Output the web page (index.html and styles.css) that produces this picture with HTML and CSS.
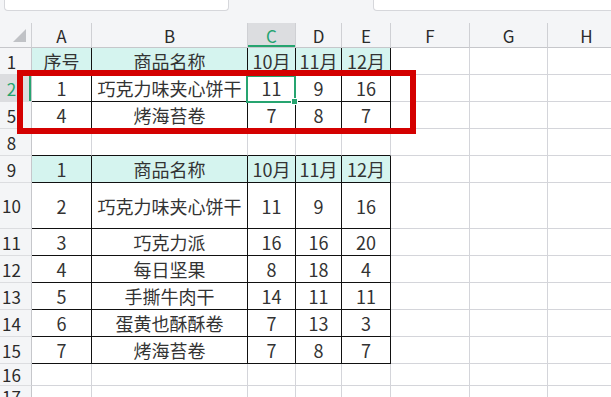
FILE: index.html
```html
<!DOCTYPE html>
<html lang="zh-CN">
    <head>
        <meta charset="UTF-8">
        <title>表格</title>
        <link rel="stylesheet" href="styles.css">
    </head>
    <body>
        <div class="toolbar">
            <div class="toolbar__box toolbar__box--name"></div>
            <div class="toolbar__box toolbar__box--formula"></div>
        </div>
        <div class="sheet">
            <table class="grid">
                <colgroup>
                    <col class="w-head">
                    <col class="w-a">
                    <col class="w-b">
                    <col class="w-c">
                    <col class="w-d">
                    <col class="w-e">
                    <col class="w-f">
                    <col class="w-g">
                    <col class="w-h">
                </colgroup>
                <tr class="row-cols">
                    <th class="corner"></th>
                    <th>A</th><th>B</th><th class="is-active">C</th><th>D</th><th>E</th><th>F</th><th>G</th><th>H</th>
                </tr>
                <tr>
                    <th class="rownum">1</th>
                    <td class="fill line">序号</td><td class="fill line">商品名称</td><td class="fill line">10月</td><td class="fill line">11月</td><td class="fill line">12月</td><td></td><td></td><td></td>
                </tr>
                <tr>
                    <th class="rownum is-active">2</th>
                    <td class="line">1</td><td class="line">巧克力味夹心饼干</td><td class="line">11</td><td class="line">9</td><td class="line">16</td><td></td><td></td><td></td>
                </tr>
                <tr>
                    <th class="rownum">5</th>
                    <td class="line">4</td><td class="line">烤海苔卷</td><td class="line">7</td><td class="line">8</td><td class="line">7</td><td></td><td></td><td></td>
                </tr>
                <tr>
                    <th class="rownum">8</th>
                    <td class="under"></td><td class="under"></td><td class="under"></td><td class="under"></td><td class="under"></td><td></td><td></td><td></td>
                </tr>
                <tr>
                    <th class="rownum">9</th>
                    <td class="fill line">1</td><td class="fill line">商品名称</td><td class="fill line">10月</td><td class="fill line">11月</td><td class="fill line">12月</td><td></td><td></td><td></td>
                </tr>
                <tr class="row-tall">
                    <th class="rownum">10</th>
                    <td class="line">2</td><td class="line">巧克力味夹心饼干</td><td class="line">11</td><td class="line">9</td><td class="line">16</td><td></td><td></td><td></td>
                </tr>
                <tr>
                    <th class="rownum">11</th>
                    <td class="line">3</td><td class="line">巧克力派</td><td class="line">16</td><td class="line">16</td><td class="line">20</td><td></td><td></td><td></td>
                </tr>
                <tr>
                    <th class="rownum">12</th>
                    <td class="line">4</td><td class="line">每日坚果</td><td class="line">8</td><td class="line">18</td><td class="line">4</td><td></td><td></td><td></td>
                </tr>
                <tr>
                    <th class="rownum">13</th>
                    <td class="line">5</td><td class="line">手撕牛肉干</td><td class="line">14</td><td class="line">11</td><td class="line">11</td><td></td><td></td><td></td>
                </tr>
                <tr>
                    <th class="rownum">14</th>
                    <td class="line">6</td><td class="line">蛋黄也酥酥卷</td><td class="line">7</td><td class="line">13</td><td class="line">3</td><td></td><td></td><td></td>
                </tr>
                <tr>
                    <th class="rownum">15</th>
                    <td class="line">7</td><td class="line">烤海苔卷</td><td class="line">7</td><td class="line">8</td><td class="line">7</td><td></td><td></td><td></td>
                </tr>
                <tr class="row-low">
                    <th class="rownum">16</th>
                    <td></td><td></td><td></td><td></td><td></td><td></td><td></td><td></td>
                </tr>
                <tr class="row-low">
                    <th class="rownum">17</th>
                    <td></td><td></td><td></td><td></td><td></td><td></td><td></td><td></td>
                </tr>
            </table>
            <div class="selection"><span class="selection__handle"></span></div>
            <div class="mark"></div>
        </div>
    </body>
</html>
```

FILE: styles.css
```css
:root{
    --green: #26a470;
    --grid: #d4d5da;
    --head-bg: #f4f5f7;
}

html, body{
    margin: 0;
}

body{
    width: 611px;
    height: 397px;
    overflow: hidden;
    background: #fff;
    font-family: "Noto Sans CJK SC", "Noto Sans", sans-serif;
    color: #333;
}

.toolbar{
    height: 23px;
    background: var(--head-bg);
    display: flex;
    align-items: flex-start;
}

.toolbar__box{
    height: 10px;
    background: #fff;
    border: 1px solid #d6d7db;
    border-top: 0;
    border-radius: 0 0 4px 4px;
}

.toolbar__box--name{
    width: 223px;
    margin-left: 4px;
}

.toolbar__box--formula{
    flex: 1;
    margin-left: 144px;
    margin-right: -6px;
}

.sheet{
    position: relative;
}

.grid{
    table-layout: fixed;
    border-collapse: separate;
    border-spacing: 0;
    width: 626px;
    font-size: 17px;
}

.w-head{ width: 32px; }
.w-a{ width: 60px; }
.w-b{ width: 156px; }
.w-c{ width: 48px; }
.w-d{ width: 46px; }
.w-e{ width: 49px; }
.w-f{ width: 79px; }
.w-g{ width: 78px; }
.w-h{ width: 78px; }

.grid tr{
    height: 27px;
}

.grid .row-cols{
    height: 25px;
}

.grid .row-tall{
    height: 46px;
}

.grid .row-low{
    height: 22px;
}

.grid th,
.grid td{
    box-sizing: border-box;
    padding: 0;
    border-right: 1px solid var(--grid);
    border-bottom: 1px solid var(--grid);
    text-align: center;
    vertical-align: middle;
    font-weight: normal;
    line-height: 1;
    white-space: nowrap;
}

.grid td{
    font-size: 18px;
    overflow: hidden;
}

.row-cols th{
    background: var(--head-bg);
    border-right-color: #cfd0d4;
    border-bottom-color: #c6c7cb;
    color: #2b2b2b;
    padding-top: 1px;
}

.row-cols th.is-active{
    background: #dcdde0;
    color: var(--green);
    box-shadow: inset 0 -2px 0 var(--green);
}

.corner{
    position: relative;
}

.corner::after{
    content: '';
    position: absolute;
    right: 5px;
    bottom: 5px;
    border-style: solid;
    border-width: 0 0 13px 13px;
    border-color: transparent transparent #c0c2c6 transparent;
}

.rownum{
    background: var(--head-bg);
    border-right-color: #c6c7cb !important;
    border-bottom-color: #dcdde0 !important;
    color: #2b2b2b;
    padding-right: 8px !important;
}

.rownum.is-active{
    background: #dcdde0;
    color: var(--green);
    box-shadow: inset -2px 0 0 var(--green);
}

.grid td.fill{
    background: #d5f4ef;
}

.grid td.line{
    border-right-color: #111;
    border-bottom-color: #111;
}

.grid td.under{
    border-bottom-color: #111;
}

.selection{
    position: absolute;
    left: 246px;
    top: 52px;
    width: 50px;
    height: 28px;
    box-sizing: border-box;
    border: 2px solid var(--green);
}

.selection__handle{
    position: absolute;
    right: -4px;
    bottom: -4px;
    width: 5px;
    height: 5px;
    background: var(--green);
    border: 1px solid #fff;
}

.mark{
    position: absolute;
    left: 17px;
    top: 47px;
    width: 399px;
    height: 64px;
    box-sizing: border-box;
    border: 6px solid #d40000;
}
```
